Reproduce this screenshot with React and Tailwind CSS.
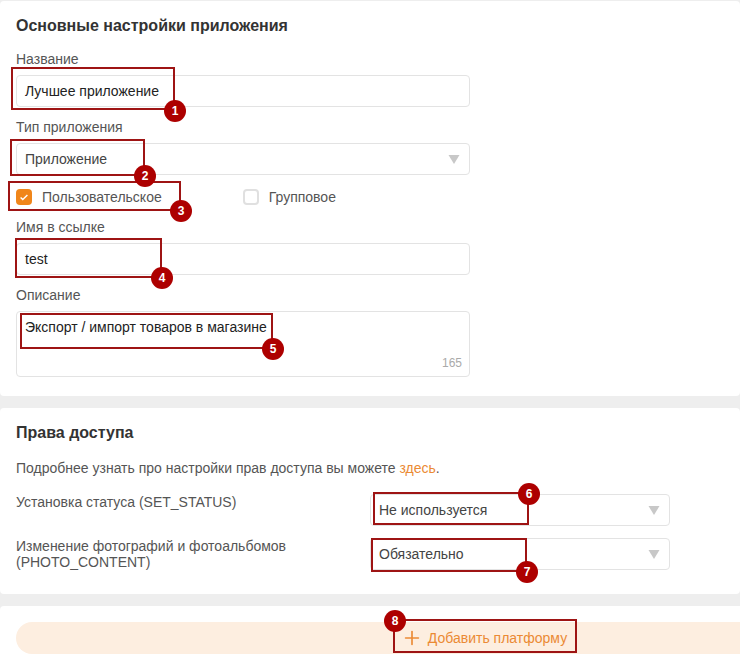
import { Plus } from 'lucide-react';

const frames = [
  'left-[11px] top-[67px] w-[164px] h-[43px]',
  'left-[10px] top-[139px] w-[135px] h-[37px]',
  'left-[8px] top-[181px] w-[173px] h-[30px]',
  'left-[15px] top-[238px] w-[147px] h-[40px]',
  'left-[20px] top-[313px] w-[253px] h-[36px]',
  'left-[373px] top-[492px] w-[156px] h-[33px]',
  'left-[371px] top-[538px] w-[156px] h-[34px]',
  'left-[393px] top-[619px] w-[184px] h-[34px]',
];

const badges = [
  { n: 1, pos: 'left-[164px] top-[100px]' },
  { n: 2, pos: 'left-[134px] top-[165px]' },
  { n: 3, pos: 'left-[170px] top-[200px]' },
  { n: 4, pos: 'left-[151px] top-[267px]' },
  { n: 5, pos: 'left-[262px] top-[338px]' },
  { n: 6, pos: 'left-[518px] top-[483px]' },
  { n: 7, pos: 'left-[516px] top-[561px]' },
  { n: 8, pos: 'left-[384px] top-[610px]' },
];

function Label({ children }) {
  return <div className="h-5 leading-5 text-[#555]">{children}</div>;
}

function Field({ children, className = '' }) {
  return (
    <div className={`flex items-center h-8 px-2 bg-white border border-[#e3e3e3] rounded-[4px] text-[#222] ${className}`}>
      {children}
    </div>
  );
}

function Select({ value, className = '' }) {
  return (
    <div className={`flex items-center justify-between h-8 pl-2 pr-[9px] bg-white border border-[#e3e3e3] rounded-[4px] text-[#444] ${className}`}>
      <span>{value}</span>
      <svg width="12" height="10" viewBox="0 0 12 10">
        <path d="M0.5 1h11L6 10z" fill="#c8c8c8" />
      </svg>
    </div>
  );
}

export default function App() {
  return (
    <div className="relative w-[740px] h-[669px] overflow-hidden bg-[#eeeeee] pt-px text-sm font-['Liberation_Sans',Arial,sans-serif]">
      <section className="bg-white rounded-[4px] px-4 pt-[15px] pb-[19px]">
        <h2 className="h-5 leading-5 text-base font-bold text-[#333]">Основные настройки приложения</h2>
        <div className="w-[454px] mt-[13px]">
          <Label>Название</Label>
          <Field className="mt-[6px]">Лучшее приложение</Field>
          <div className="mt-[10px]"><Label>Тип приложения</Label></div>
          <Select value="Приложение" className="mt-[6px]" />
          <div className="flex items-center h-6 mt-[10px] text-[#555]">
            <span className="flex items-center justify-center w-4 h-4 rounded-[4px] bg-[#f0861a]">
              <svg width="8" height="7" viewBox="0 0 8 7" fill="none" stroke="#fff" strokeWidth="1.4">
                <path d="M0.6 3.4l2.2 2.2L7.4 1" />
              </svg>
            </span>
            <span className="ml-[10px]">Пользовательское</span>
            <span className="w-4 h-4 ml-[81px] rounded-[4px] border-2 border-[#e0e0e0] bg-white" />
            <span className="ml-[10px]">Групповое</span>
          </div>
          <div className="mt-2"><Label>Имя в ссылке</Label></div>
          <Field className="mt-[6px]">test</Field>
          <div className="mt-[10px]"><Label>Описание</Label></div>
          <div className="relative h-[66px] mt-[6px] px-2 py-[5px] leading-5 bg-white border border-[#e3e3e3] rounded-[4px] text-[#222]">
            Экспорт / импорт товаров в магазине
            <span className="absolute right-[7px] bottom-[5px] text-xs leading-4 text-[#aaa]">165</span>
          </div>
        </div>
      </section>

      <section className="mt-3 bg-white rounded-[4px] px-4 pt-[15px] pb-6">
        <h2 className="h-5 leading-5 text-base font-bold text-[#333]">Права доступа</h2>
        <p className="h-5 leading-5 mt-[15px] text-[#555]">
          Подробнее узнать про настройки прав доступа вы можете <span className="text-[#eb8a34]">здесь</span>.
        </p>
        <div className="flex mt-4 w-[654px]">
          <div className="w-[354px] leading-4 text-[#555]">Установка статуса (SET_STATUS)</div>
          <Select value="Не используется" className="w-[300px]" />
        </div>
        <div className="flex mt-3 w-[654px]">
          <div className="w-[354px] leading-4 text-[#555]">
            Изменение фотографий и фотоальбомов
            <br />
            (PHOTO_CONTENT)
          </div>
          <Select value="Обязательно" className="w-[300px]" />
        </div>
      </section>

      <section className="mt-3 h-[80px] w-[972px] bg-white rounded-[4px] px-4 pt-4">
        <div className="flex items-center justify-center gap-[5px] h-8 w-[936px] rounded-2xl bg-[#fdeee0] text-[#eb8a34]">
          <Plus size={22} strokeWidth={1.8} />
          <span>Добавить платформу</span>
        </div>
      </section>

      {frames.map((pos) => (
        <div key={pos} className={`absolute border-2 border-[#9e1414] ${pos}`} />
      ))}
      {badges.map((b) => (
        <div
          key={b.n}
          className={`absolute flex items-center justify-center w-[22px] h-[22px] rounded-full bg-[#ad0000] text-white text-xs font-bold ${b.pos}`}
        >
          {b.n}
        </div>
      ))}
    </div>
  );
}
